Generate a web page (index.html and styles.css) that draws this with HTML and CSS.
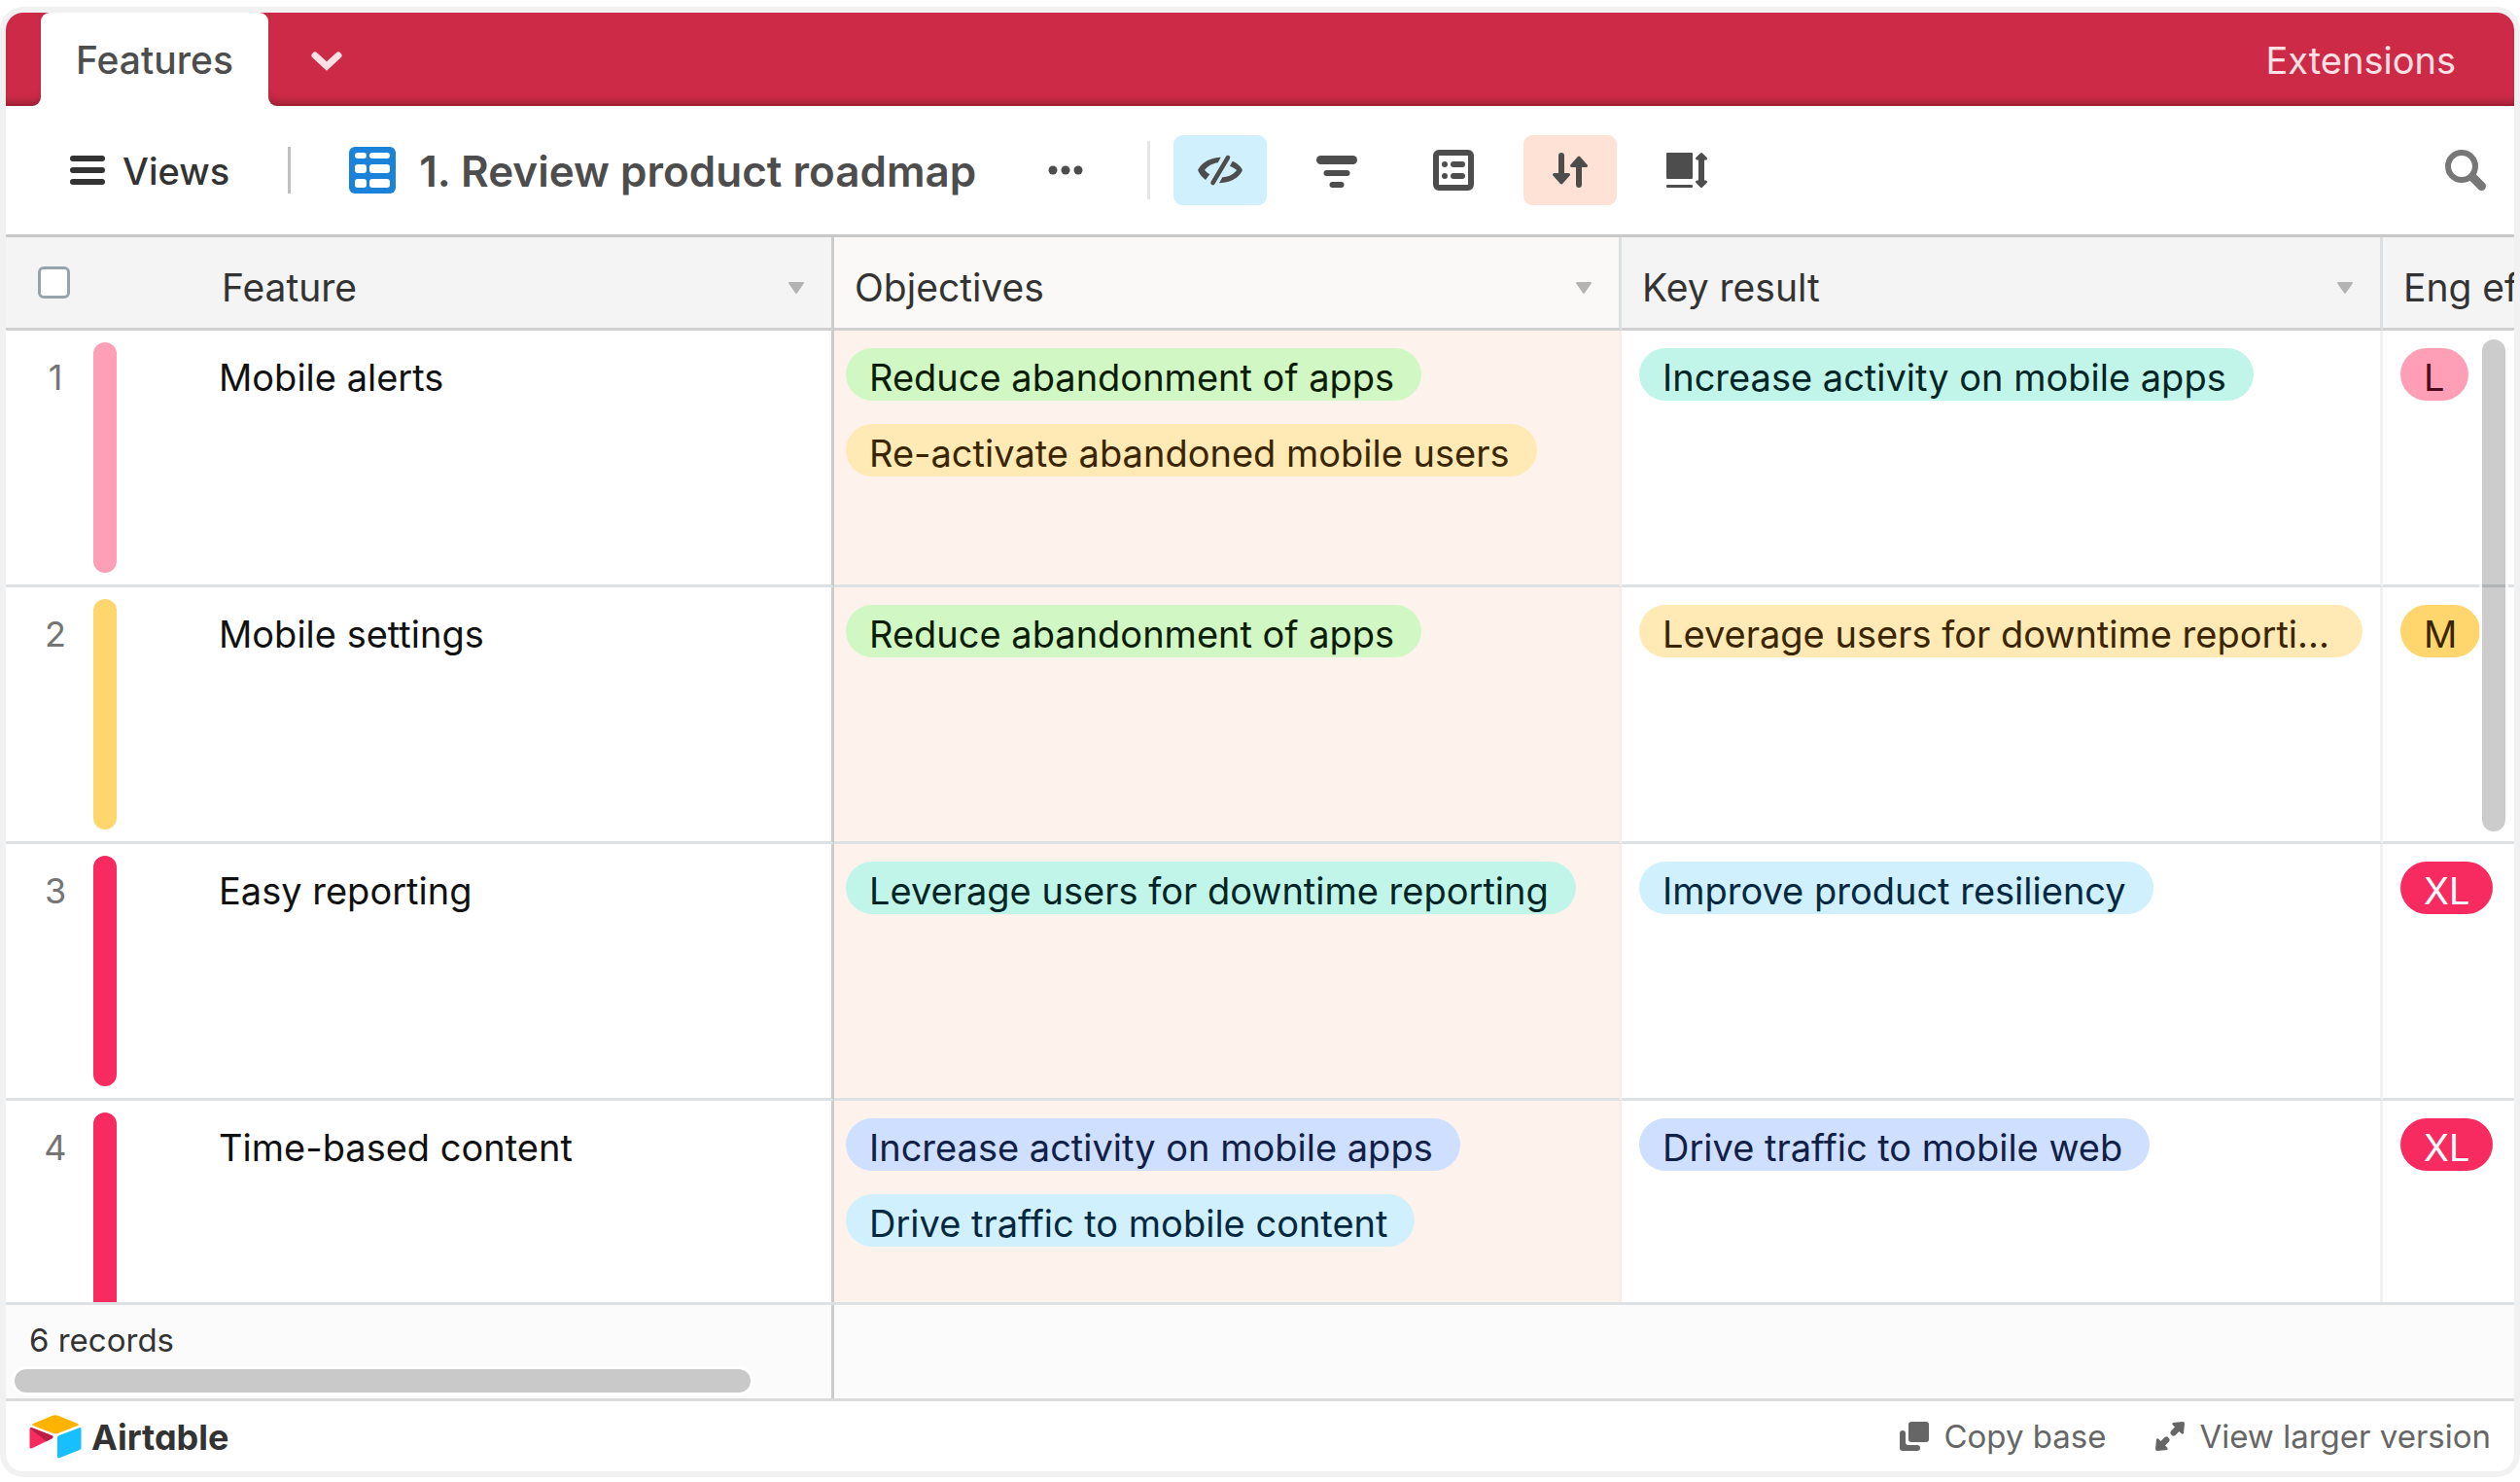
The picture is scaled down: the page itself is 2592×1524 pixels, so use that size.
FILE: index.html
```html
<!DOCTYPE html>
<html lang="en">
<head>
<meta charset="utf-8">
<title>Features - Airtable</title>
<link rel="stylesheet" href="styles.css">
</head>
<body>
<div class="frame">
  <header class="tabs">
    <div class="tabs-start"></div>
    <div class="tab-slot"><button class="tab" type="button">Features</button></div>
    <div class="tabs-rest">
      <button class="tab-menu" type="button" aria-label="All tables">
        <svg width="36" height="24" viewBox="0 0 36 24"><path d="M6 7l12 11L30 7" fill="none" stroke="currentColor" stroke-width="7" stroke-linecap="round"/></svg>
      </button>
      <button class="extensions" type="button">Extensions</button>
    </div>
  </header>

  <div class="toolbar">
    <button class="views" type="button">
      <svg width="36" height="30" viewBox="0 0 36 30" fill="currentColor"><rect width="36" height="6" rx="3"/><rect y="12" width="36" height="6" rx="3"/><rect y="24" width="36" height="6" rx="3"/></svg>
      <span class="views-label">Views</span>
    </button>
    <span class="rule rule-dark"></span>
    <svg class="grid-icon" width="48" height="48" viewBox="0 0 48 48"><rect width="48" height="48" rx="6" fill="#1b82da"/><g fill="#fff"><rect x="6" y="6" width="12" height="6" rx="3"/><rect x="21" y="6" width="21" height="6" rx="3"/><rect x="6" y="18" width="12" height="9" rx="3"/><rect x="21" y="18" width="21" height="9" rx="3"/><rect x="6" y="33" width="12" height="9" rx="3"/><rect x="21" y="33" width="21" height="9" rx="3"/></g></svg>
    <h1 class="title">1. Review product roadmap</h1>
    <button class="more" type="button" aria-label="View options">
      <svg width="36" height="10" viewBox="0 0 36 10" fill="currentColor"><circle cx="5" cy="5" r="4.500"/><circle cx="18" cy="5" r="4.500"/><circle cx="31" cy="5" r="4.500"/></svg>
    </button>
    <span class="rule rule-light"></span>
    <div class="tools">
      <button class="tool tool-hide" type="button" aria-label="Hidden fields">
        <svg width="48" height="48" viewBox="0 0 48 48" fill="currentColor"><path d="M24.700 10.700C15 11 6 15 1.500 23q-.6 1 0 2C3 28.500 6 31.500 9 34l4.300-5.700C11 27 9.500 25.500 8 24c3-4 8-7 13.700-7.700z"/><path d="M36.700 14.700L34 19.700c3 1.200 5 2.500 7 4.300-3 4-8 7-14.700 7.300L23 37.300c10 0 19-4 23.500-12.300q.6-1 0-2c-2-3.500-5.500-6.500-9.800-8.300z"/><path d="M32 11L16.500 37" fill="none" stroke="currentColor" stroke-width="4.500" stroke-linecap="round"/></svg>
      </button>
      <button class="tool" type="button" aria-label="Filter">
        <svg width="48" height="48" viewBox="0 0 48 48" fill="currentColor"><rect x="3" y="9" width="42" height="9" rx="4.500"/><rect x="10.500" y="24" width="27" height="6" rx="3"/><rect x="16.500" y="36" width="15" height="6" rx="3"/></svg>
      </button>
      <button class="tool" type="button" aria-label="Group">
        <svg width="48" height="48" viewBox="0 0 48 48" fill="currentColor"><rect x="6" y="6" width="36" height="36" rx="3" fill="none" stroke="currentColor" stroke-width="6"/><circle cx="15" cy="18" r="3"/><rect x="21" y="15" width="15" height="6" rx="3"/><circle cx="15" cy="30" r="3"/><rect x="21" y="27" width="15" height="6" rx="3"/></svg>
      </button>
      <button class="tool tool-sort" type="button" aria-label="Sort">
        <svg width="48" height="48" viewBox="0 0 48 48" fill="currentColor" stroke="currentColor" stroke-linecap="round" stroke-linejoin="round"><path d="M15 9v24M33 39V15" stroke-width="6"/><path d="M7.500 28.500h15L15 37zM25.500 19.500h15L33 11z" stroke-width="3"/></svg>
      </button>
      <button class="tool" type="button" aria-label="Row height">
        <svg width="48" height="48" viewBox="0 0 48 48" fill="currentColor"><rect x="3" y="6" width="27" height="27" rx="1"/><rect x="3" y="39" width="27" height="3" rx="1"/><path d="M39 12v24" stroke="currentColor" stroke-width="6"/><path d="M34.500 12h9L39 7.500zM34.500 36h9L39 40.500z" stroke="currentColor" stroke-width="3" stroke-linejoin="round"/></svg>
      </button>
    </div>
    <button class="search" type="button" aria-label="Search">
      <svg width="48" height="48" viewBox="0 0 48 48" fill="none" stroke="currentColor"><circle cx="20" cy="20" r="14" stroke-width="6"/><path d="M31 31l9.500 9.500" stroke-width="9" stroke-linecap="round"/></svg>
    </button>
  </div>

  <main class="grid">
    <table class="records">
      <colgroup><col class="col-feature"><col class="col-objectives"><col class="col-result"><col class="col-effort"></colgroup>
      <thead>
        <tr>
          <th scope="col"><div class="head head-first"><input class="check" type="checkbox" aria-label="Select all records"><span class="label">Feature</span><svg class="caret" width="18" height="14" viewBox="0 0 18 14"><path d="M2 2h14L9 12z"/></svg></div></th>
          <th scope="col" class="sorted"><div class="head"><span class="label">Objectives</span><svg class="caret" width="18" height="14" viewBox="0 0 18 14"><path d="M2 2h14L9 12z"/></svg></div></th>
          <th scope="col"><div class="head"><span class="label">Key result</span><svg class="caret" width="18" height="14" viewBox="0 0 18 14"><path d="M2 2h14L9 12z"/></svg></div></th>
          <th scope="col"><div class="head"><span class="label">Eng ef</span></div></th>
        </tr>
      </thead>
      <tbody>
        <tr>
          <td><div class="record"><span class="number">1</span><span class="bar pink"></span><span class="name">Mobile alerts</span></div></td>
          <td class="sorted"><div class="pills"><span class="pill green">Reduce abandonment of apps</span><span class="pill yellow">Re-activate abandoned mobile users</span></div></td>
          <td><div class="pills"><span class="pill teal">Increase activity on mobile apps</span></div></td>
          <td><div class="pills"><span class="pill pill-size pink">L</span></div></td>
        </tr>
        <tr>
          <td><div class="record"><span class="number">2</span><span class="bar gold"></span><span class="name">Mobile settings</span></div></td>
          <td class="sorted"><div class="pills"><span class="pill green">Reduce abandonment of apps</span></div></td>
          <td><div class="pills"><span class="pill pill-full yellow">Leverage users for downtime reporti...</span></div></td>
          <td><div class="pills"><span class="pill pill-size gold">M</span></div></td>
        </tr>
        <tr>
          <td><div class="record"><span class="number">3</span><span class="bar red"></span><span class="name">Easy reporting</span></div></td>
          <td class="sorted"><div class="pills"><span class="pill teal">Leverage users for downtime reporting</span></div></td>
          <td><div class="pills"><span class="pill cyan">Improve product resiliency</span></div></td>
          <td><div class="pills"><span class="pill pill-size red">XL</span></div></td>
        </tr>
        <tr>
          <td><div class="record"><span class="number">4</span><span class="bar red"></span><span class="name">Time-based content</span></div></td>
          <td class="sorted"><div class="pills"><span class="pill blue">Increase activity on mobile apps</span><span class="pill cyan">Drive traffic to mobile content</span></div></td>
          <td><div class="pills"><span class="pill blue">Drive traffic to mobile web</span></div></td>
          <td><div class="pills"><span class="pill pill-size red">XL</span></div></td>
        </tr>
      </tbody>
    </table>
    <div class="scroll-y"></div>
  </main>

  <div class="summary">
    <div class="summary-first">
      <span class="count">6 records</span>
      <div class="scroll-x"></div>
    </div>
  </div>

  <footer class="footer">
    <a class="brand" href="#">
      <svg width="54" height="45" viewBox="0 0 54 45"><path d="M24 .8L4 9q-2 1 0 2l20 7.800q3 1 6 0L50 11q2-1 0-2L30 .8q-3-1.200-6 0z" fill="#fcb400"/><path d="M29 23v20q0 2 2 1.200L52 36q1.500-.6 1.500-2V14.500q0-2-2-1.200L30.500 21.300q-1.500.6-1.500 1.700z" fill="#18bfff"/><path d="M24 24L17.500 27.200 3 34.200q-2.500 1-2.500-1V14.800q0-2.500 2.500-1.500l20.500 8q2 1.200.5 2.700z" fill="#f82b60"/><path d="M24 24l-6.500 3.200L1 13.800q.8-.9 2-.5l20.500 8q2 1.200.5 2.700z" fill="#ba1e45"/></svg>
      <span class="brand-name">Airtable</span>
    </a>
    <a class="action" href="#">
      <svg width="30" height="30" viewBox="0 0 30 30" fill="currentColor"><rect x="9" width="21" height="21" rx="3"/><path d="M3 9q3 0 3 3v9q0 3 3 3h9q3 0 3 3t-3 3H3q-3 0-3-3V12q0-3 3-3z"/></svg>
      Copy base
    </a>
    <a class="action" href="#">
      <svg width="30" height="30" viewBox="0 0 30 30" fill="currentColor"><path d="M18 1l10-1q2 0 2 2l-1 10q-1 1.500-2.500 0l-2-2-4 4q-2 1.500-3.500 0l-1-1q-1.500-1.500 0-3.500l4-4-2-2Q16.500 2 18 1z"/><path d="M12 29L2 30q-2 0-2-2l1-10q1-1.500 2.500 0l2 2 4-4q2-1.500 3.500 0l1 1q1.500 1.500 0 3.500l-4 4 2 2q1.500 1.500 0 2.500z"/></svg>
      View larger version
    </a>
  </footer>
</div>
</body>
</html>
```
FILE: styles.css
```css
* { box-sizing: border-box; }

body {
  margin: 0;
  background: #fff;
  color: #333;
  font: 400 39px/48px Inter, "Liberation Sans", sans-serif;
}

button {
  margin: 0;
  padding: 0;
  border: 0;
  background: none;
  color: inherit;
  font: inherit;
}

svg { display: block; flex: none; }

.frame {
  display: flex;
  flex-direction: column;
  height: calc(100vh - 12px);
  margin: 7px 0 5px;
  border: 6px solid #f1f1f1;
  border-radius: 24px;
  overflow: hidden;
}

/* Table tabs */
.tabs { display: flex; flex: none; height: 96px; }
.tabs-start,
.tabs-rest {
  background: #cc2a46;
  box-shadow: inset 0 -9px 9px -6px rgba(0, 0, 0, .3);
}
.tabs-start { width: 36px; border-bottom-right-radius: 9px; }
.tab-slot { background: linear-gradient(#cc2a46 9px, #fff 9px); }
.tab {
  height: 96px;
  padding: 2px 36px 0;
  border-radius: 9px 9px 0 0;
  background: #fff;
  color: #4d4d4d;
  font-weight: 500;
}
.tabs-rest {
  display: flex;
  flex: 1;
  align-items: center;
  justify-content: space-between;
  padding: 2px 60px 0 42px;
  border-bottom-left-radius: 9px;
  color: #ffe0e4;
}
.extensions { font-size: 38px; }

/* Toolbar */
.toolbar {
  display: flex;
  flex: none;
  align-items: center;
  height: 135px;
  padding: 0 26px 0 66px;
  border-bottom: 3px solid #c8c8c8;
  color: #4d4d4d;
}
.views { display: flex; align-items: center; gap: 18px; color: #333; font-size: 38px; font-weight: 500; }
.views-label, .title { padding-top: 2px; }
.rule { flex: none; width: 3px; }
.rule-dark { height: 48px; margin: 0 60px; background: #c0c0c0; }
.rule-light { height: 60px; margin: 0 24px 0 66px; background: #e5e5e5; }
.title { margin: 0 74px 0 24px; font-size: 44px; font-weight: 600; white-space: nowrap; }
.tools { display: flex; gap: 24px; }
.tool {
  display: flex;
  align-items: center;
  justify-content: center;
  width: 96px;
  height: 72px;
  border-radius: 9px;
}
.tool-hide { background: #d0f0fd; }
.tool-sort { background: #fee2d5; }
.search { margin-left: auto; color: #777; }

/* Record grid */
.grid { position: relative; flex: 1; min-height: 0; overflow: hidden; }
.records { width: 100%; border-spacing: 0; table-layout: fixed; }
.col-feature { width: 852px; }
.col-objectives { width: 810px; }
.col-result { width: 783px; }
th, td { padding: 0; text-align: left; vertical-align: top; font-weight: 400; }
th {
  height: 96px;
  border-right: 3px solid #dde0e3;
  border-bottom: 3px solid #d0d0d0;
  background: #f4f4f4;
  vertical-align: middle;
}
td {
  height: 264px;
  border-right: 3px solid #f2f2f2;
  border-bottom: 3px solid #dde1e3;
}
th:first-child, td:first-child { border-right-color: #ccc; }
th:last-child, td:last-child { border-right: 0; }
th.sorted { background: #faf9f7; }
td.sorted { background: #fff2ea; background: #fef3ec; border-right-color: #f6efeb; }

.head { display: flex; align-items: center; height: 93px; padding: 10px 27px 0 21px; white-space: nowrap; }
.head-first { padding-left: 33px; }
.head .label { flex: 1; }
.head-first .label { padding-left: 156px; }
.caret { fill: #b3b3b3; stroke: #b3b3b3; stroke-width: 2; stroke-linejoin: round; }
.check {
  flex: none;
  width: 33px;
  height: 33px;
  margin: 0 0 10px;
  border: 3px solid #97a3aa;
  border-radius: 6px;
  background: #fff;
  appearance: none;
}

.record { display: flex; padding-top: 12px; }
.number { width: 102px; margin-right: -12px; padding-top: 12px; color: #757575; font-size: 36px; text-align: center; }
.bar { width: 24px; height: 237px; border-radius: 12px; }
.name { padding: 12px 0 0 105px; color: #111; font-size: 38px; }

.pills { display: flex; flex-direction: column; align-items: flex-start; gap: 24px; padding: 18px; }
td.sorted .pills { padding-left: 12px; }
.pill {
  height: 54px;
  padding: 6px 28px 0 24px;
  border-radius: 27px;
  font-size: 38px;
  white-space: nowrap;
}
.pill-full { width: 100%; }
.pill-size { padding-right: 24px; }
.green { background: #d1f7c4; color: #0b1d05; }
.yellow { background: #ffeab6; color: #3b2501; }
.teal { background: #c2f5e9; color: #012524; }
.blue { background: #cfdfff; color: #102046; }
.cyan { background: #d0f0fd; color: #04283f; }
.pink { background: #ff9eb7; color: #4c0c1c; }
.gold { background: #ffd66e; color: #3b2501; }
.red { background: #f82b60; color: #fff; }

.scroll-y {
  position: absolute;
  top: 105px;
  right: 9px;
  width: 24px;
  height: 506px;
  border-radius: 12px;
  background: rgba(0, 0, 0, .2);
  box-shadow: 0 0 0 3px rgba(255, 255, 255, .8);
}

/* Summary bar */
.summary { display: flex; flex: none; height: 102px; border: solid #dde1e3; border-width: 3px 0; border-bottom-color: #dadada; background: #fbfbfb; }
.summary-first {
  display: flex;
  flex-direction: column;
  justify-content: space-between;
  width: 852px;
  padding: 12px 9px 6px;
  border-right: 3px solid #ccc;
}
.count { padding-left: 15px; font-size: 33px; }
.scroll-x { width: 757px; height: 24px; border-radius: 12px; background: #c9c9c9; box-shadow: 0 0 0 3px #fff; }

/* Footer */
.footer { display: flex; flex: none; align-items: center; gap: 51px; height: 72px; padding: 0 24px; }
.footer a { display: flex; align-items: center; text-decoration: none; white-space: nowrap; }
.brand { gap: 10px; margin-right: auto; color: #333; }
.brand-name { padding-top: 2px; font-size: 36px; font-weight: 700; font-feature-settings: "cv11"; }
.action { gap: 15px; color: #666; font-size: 33px; }
```
